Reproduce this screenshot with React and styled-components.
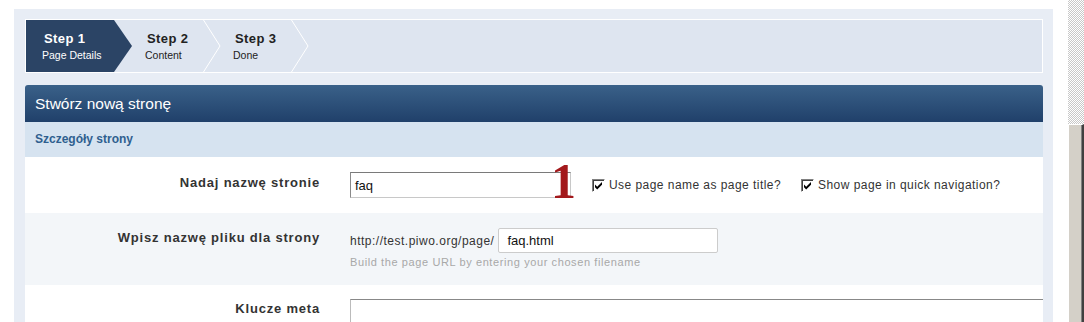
import React from 'react';
import styled, { createGlobalStyle } from 'styled-components';

const GlobalStyle = createGlobalStyle`
  html, body {
    margin: 0;
    padding: 0;
    background: #ffffff;
  }
  body {
    font-family: 'Liberation Sans', Arial, sans-serif;
    color: #333;
    overflow: hidden;
  }
`;

const Page = styled.div`
  display: flex;
  align-items: flex-start;
  width: 1084px;
  height: 322px;
  overflow: hidden;
`;

const Panel = styled.div`
  margin: 9px 0 0 14px;
  width: 1039px;
  padding: 10px 10px 0 11px;
  box-sizing: border-box;
  background: #e8edf5;
  display: flex;
  flex-direction: column;
  gap: 12px;
  flex: none;
`;

const Scrollbar = styled.div`
  margin-left: auto;
  width: 16px;
  height: 322px;
  display: flex;
  flex-direction: column;
`;

const Checker = styled.div`
  height: 124px;
  background-color: #ffffff;
  background-image: repeating-conic-gradient(#c8c8c8 0 25%, #ffffff 0 50%);
  background-size: 2px 2px;
`;

const Thumb = styled.div`
  flex: 1;
  background: #d4d0c8;
  border-top: 1px solid #ffffff;
  border-left: 1px solid #ffffff;
  border-right: 2px solid #404040;
  box-shadow: inset -1px 0 0 #808080;
`;

const StepsBar = styled.div`
  display: flex;
  flex: none;
  height: 52px;
  border: 1px solid #ffffff;
  background: #dee5f0;
`;

const Step = styled.div`
  position: relative;
  width: ${p => p.$width}px;
  padding: 11px 0 0 ${p => p.$pad}px;
  box-sizing: border-box;
  color: ${p => (p.$active ? '#ffffff' : '#222')};
  background: ${p => (p.$active ? '#2b4465' : 'transparent')};
  clip-path: ${p =>
    p.$active
      ? 'polygon(0 0, calc(100% - 18px) 0, 100% 50%, calc(100% - 18px) 100%, 0 100%)'
      : 'none'};
`;

const StepTitle = styled.div`
  font-size: 13px;
  font-weight: bold;
  line-height: 15px;
  letter-spacing: 0.4px;
`;

const StepSub = styled.div`
  font-size: 10.5px;
  line-height: 14px;
  margin: 2px 0 0 -2px;
`;

const Chevron = styled.svg`
  position: absolute;
  right: 0;
  top: 0;
`;

const Form = styled.div`
  display: flex;
  flex-direction: column;
  flex: none;
`;

const Header = styled.div`
  height: 37px;
  border-radius: 3px 3px 0 0;
  background: linear-gradient(#3a6189, #20406a);
  color: #ffffff;
  font-size: 15.5px;
  line-height: 37px;
  padding-left: 10px;
`;

const Section = styled.div`
  height: 35px;
  background: #d6e3f0;
  color: #2f5f8f;
  font-size: 12px;
  font-weight: bold;
  line-height: 35px;
  padding-left: 10px;
`;

const Row = styled.div`
  display: flex;
  align-items: flex-start;
  height: ${p => p.$height}px;
  padding-top: ${p => p.$top}px;
  box-sizing: border-box;
  background: ${p => (p.$alt ? '#f3f6f9' : '#ffffff')};
`;

const Label = styled.div`
  width: 295px;
  flex: none;
  text-align: right;
  font-size: 13px;
  font-weight: bold;
  letter-spacing: 0.8px;
  color: #333;
  padding-top: ${p => p.$top}px;
  line-height: 15px;
`;

const Field = styled.div`
  margin-left: 30px;
  display: flex;
  align-items: center;
  flex: 1;
`;

const FieldCol = styled.div`
  margin-left: 30px;
  display: flex;
  flex-direction: column;
`;

const Inline = styled.div`
  display: flex;
  align-items: center;
`;

const Annotated = styled.div`
  position: relative;
`;

const TextInput = styled.div`
  width: ${p => p.$width}px;
  height: ${p => p.$height}px;
  box-sizing: border-box;
  background: #ffffff;
  font-size: 13px;
  display: flex;
  align-items: center;
  padding-left: ${p => p.$pad}px;
  color: #111;
  border: 1px solid ${p => (p.$sunken ? '#c8c8c8' : '#cccccc')};
  border-top-color: ${p => (p.$sunken ? '#7a7a7a' : '#cccccc')};
  border-left-color: ${p => (p.$sunken ? '#8a8a8a' : '#cccccc')};
  border-radius: ${p => (p.$sunken ? 0 : 2)}px;
`;

const Marker = styled.span`
  position: absolute;
  left: 201px;
  top: -16px;
  font-family: 'Liberation Serif', 'Times New Roman', serif;
  font-weight: bold;
  font-size: 50px;
  line-height: 50px;
  color: #a3191c;
`;

const Check = styled.label`
  display: flex;
  align-items: center;
  font-size: 12px;
  letter-spacing: 0.45px;
  color: #333;
  margin-left: ${p => p.$gap}px;
`;

const Box = styled.span`
  width: 13px;
  height: 13px;
  box-sizing: border-box;
  border: 1px solid #ffffff;
  border-top-color: #808080;
  border-left-color: #808080;
  box-shadow: inset 1px 1px 0 #404040;
  background: #ffffff;
  margin-right: 4px;
  display: flex;
  align-items: center;
  justify-content: center;
`;

const Prefix = styled.span`
  font-size: 12px;
  letter-spacing: 0.5px;
  margin-right: 4px;
  color: #333;
`;

const Hint = styled.div`
  margin-top: 3px;
  font-size: 11px;
  color: #a8a8a8;
  letter-spacing: 0.6px;
`;

const TextArea = styled.div`
  flex: 1;
  height: 40px;
  border-top: 1px solid #888;
  border-left: 1px solid #bbb;
  background: #ffffff;
`;

const steps = [
  { title: 'Step 1', sub: 'Page Details', width: 106, pad: 18, active: true },
  { title: 'Step 2', sub: 'Content', width: 89, pad: 15 },
  { title: 'Step 3', sub: 'Done', width: 88, pad: 14 },
];

const CheckMark = () => (
  <svg width="9" height="9" viewBox="0 0 9 9">
    <path d="M1 3.5 L3.2 5.7 L8 1 L8 3.8 L3.2 8.5 L1 6.3 Z" fill="#000" />
  </svg>
);

const App = () => (
  <>
    <GlobalStyle />
    <Page>
      <Panel>
        <StepsBar>
          {steps.map(s => (
            <Step key={s.title} $width={s.width} $pad={s.pad} $active={s.active}>
              <StepTitle>{s.title}</StepTitle>
              <StepSub>{s.sub}</StepSub>
              {!s.active && (
                <Chevron width="18" height="52" viewBox="0 0 18 52">
                  <polyline points="0.5,0 17,26 0.5,52" fill="none" stroke="#ffffff" strokeWidth="1" />
                </Chevron>
              )}
            </Step>
          ))}
        </StepsBar>
        <Form>
          <Header>Stwórz nową stronę</Header>
          <Section>Szczegóły strony</Section>
          <Row $height={56} $top={15}>
            <Label $top={3}>Nadaj nazwę stronie</Label>
            <Field>
              <Annotated>
                <TextInput $width={221} $height={26} $pad={4} $sunken>faq</TextInput>
                <Marker>1</Marker>
              </Annotated>
              <Check $gap={21}>
                <Box><CheckMark /></Box>
                Use page name as page title?
              </Check>
              <Check $gap={20}>
                <Box><CheckMark /></Box>
                Show page in quick navigation?
              </Check>
            </Field>
          </Row>
          <Row $height={72} $top={15} $alt>
            <Label $top={2}>Wpisz nazwę pliku dla strony</Label>
            <FieldCol>
              <Inline>
                <Prefix>http://test.piwo.org/page/</Prefix>
                <TextInput $width={220} $height={25} $pad={8}>faq.html</TextInput>
              </Inline>
              <Hint>Build the page URL by entering your chosen filename</Hint>
            </FieldCol>
          </Row>
          <Row $height={60} $top={14}>
            <Label $top={2}>Klucze meta</Label>
            <Field>
              <TextArea />
            </Field>
          </Row>
        </Form>
      </Panel>
      <Scrollbar>
        <Checker />
        <Thumb />
      </Scrollbar>
    </Page>
  </>
);

export default App;
